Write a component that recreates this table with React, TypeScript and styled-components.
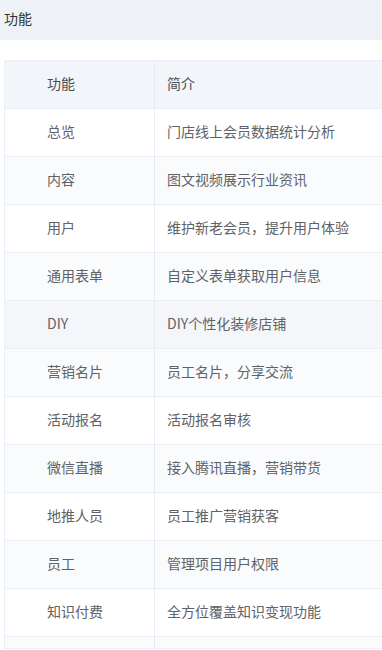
import React from "react";
import styled, { createGlobalStyle } from "styled-components";

const GlobalStyle = createGlobalStyle`
  html, body {
    margin: 0;
    padding: 0;
    background: #ffffff;
    overflow: hidden;
  }
  body {
    font-family: "Noto Sans CJK SC", "Noto Sans", sans-serif;
    font-size: 14px;
  }
`;

const Page = styled.div`
  display: flex;
  flex-direction: column;
  width: 382px;
`;

const TopBar = styled.div`
  height: 40px;
  background: #eef1f6;
  display: flex;
  align-items: center;
  padding: 0 4px;
  box-sizing: border-box;
`;

const Title = styled.span`
  font-size: 14px;
  color: #303133;
  line-height: 20px;
  margin-top: -5px;
`;

const TableWrap = styled.div`
  margin: 20px 0 0 4px;
  width: 378px;
  border-top: 1px solid #ebeef5;
  border-left: 1px solid #ebeef5;
  box-sizing: border-box;
`;

const Row = styled.div<{ $bg: string; $height?: number }>`
  display: grid;
  grid-template-columns: 150px 1fr;
  height: ${(p) => p.$height ?? 47}px;
  background: ${(p) => p.$bg};
  border-bottom: 1px solid #ebeef5;
`;

const Cell = styled.div<{ $first?: boolean; $head?: boolean }>`
  display: flex;
  align-items: center;
  padding-left: ${(p) => (p.$first ? 42 : 12)}px;
  padding-bottom: 3px;
  border-right: ${(p) => (p.$first ? "1px solid #e8eaf3" : "none")};
  color: ${(p) => (p.$head ? "#4a4d52" : "#606266")};
  font-size: 14px;
  white-space: nowrap;
  overflow: hidden;
`;

const rows: [string, string][] = [
  ["总览", "门店线上会员数据统计分析"],
  ["内容", "图文视频展示行业资讯"],
  ["用户", "维护新老会员，提升用户体验"],
  ["通用表单", "自定义表单获取用户信息"],
  ["DIY", "DIY个性化装修店铺"],
  ["营销名片", "员工名片，分享交流"],
  ["活动报名", "活动报名审核"],
  ["微信直播", "接入腾讯直播，营销带货"],
  ["地推人员", "员工推广营销获客"],
  ["员工", "管理项目用户权限"],
  ["知识付费", "全方位覆盖知识变现功能"],
];

const rowBg = (i: number) => {
  if (i === 4) return "#f4f6f9";
  return i % 2 === 1 ? "#fafbfd" : "#ffffff";
};

export default function App() {
  return (
    <>
      <GlobalStyle />
      <Page>
        <TopBar>
          <Title>功能</Title>
        </TopBar>
        <TableWrap>
          <Row $bg="#f2f5f9">
            <Cell $first $head>功能</Cell>
            <Cell $head>简介</Cell>
          </Row>
          {rows.map(([name, desc], i) => (
            <Row key={name} $bg={rowBg(i)}>
              <Cell $first>{name}</Cell>
              <Cell>{desc}</Cell>
            </Row>
          ))}
          <Row $bg="#fafbfd" $height={11}>
            <Cell $first />
            <Cell />
          </Row>
        </TableWrap>
      </Page>
    </>
  );
}
